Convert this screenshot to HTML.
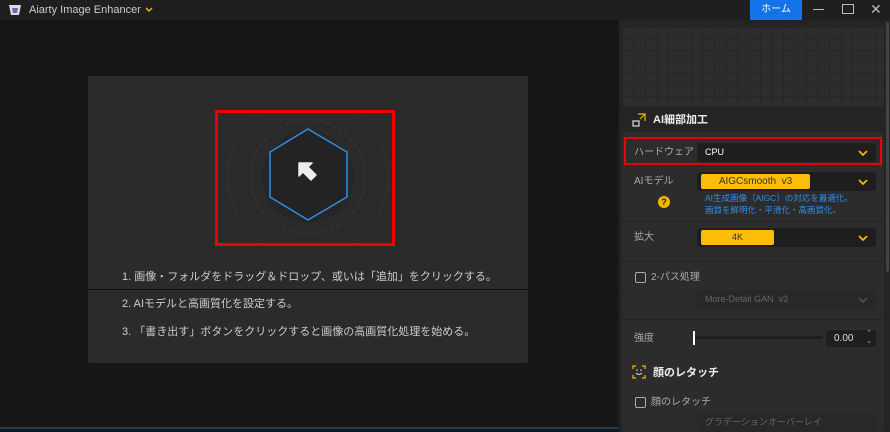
<!DOCTYPE html>
<html><head><meta charset="utf-8"><style>
*{margin:0;padding:0;box-sizing:border-box}
body{width:890px;height:432px;overflow:hidden;background:#161616;font-family:"Liberation Sans","Noto Sans CJK JP",sans-serif;position:relative;color:#ddd}
.abs{position:absolute}
.title{left:0;top:0;width:890px;height:20px;background:#1f1f1f}
.sel{background:#1e1e1e;border-radius:3px;height:19px}
.chev{position:absolute;right:8px;top:5px}
.lbl{font-size:10px;color:#aaa;line-height:12px}
</style></head><body>
<div class="abs title"></div>
<svg class="abs" style="left:8px;top:3px" width="14" height="14" viewBox="0 0 14 14"><path d="M1 2h12l-2 10H3z" fill="#ddd"/><path d="M4 5h6l-1 5H5z" fill="#7a5fb8"/></svg>
<div class="abs" style="left:29px;top:4px;font-size:11px;color:#ccc;line-height:13px">Aiarty Image Enhancer</div>
<svg class="abs" style="left:145px;top:7px" width="8" height="6"><path d="M1 1l3 3 3-3" stroke="#f2b800" stroke-width="1.5" fill="none"/></svg>
<div class="abs" style="left:750px;top:0;width:52px;height:20px;background:#1473e6;color:#fff;font-size:10px;text-align:center;line-height:19px">ホーム</div>
<div class="abs" style="left:813px;top:9px;width:11px;height:1px;background:#bbb"></div>
<div class="abs" style="left:842px;top:4px;width:12px;height:10px;border:1.5px solid #bbb"></div>
<div class="abs" style="left:870px;top:1px;color:#bbb;font-size:14px">✕</div>

<div class="abs" style="left:88px;top:76px;width:440px;height:287px;background:#2b2b2b;border-radius:2px"></div>
<div class="abs" style="left:0;top:289px;width:618px;height:1px;background:#111"></div>
<div class="abs" style="left:0;top:427px;width:618px;height:2px;background:#1c3d5c"></div>
<svg class="abs" style="left:215px;top:110px" width="180" height="136" viewBox="0 0 180 136">
<circle cx="93" cy="67" r="80" fill="none" stroke="#333" stroke-width="1"/>
<circle cx="93" cy="67" r="57" fill="none" stroke="#3a3a3a" stroke-dasharray="4 3"/>
<circle cx="93" cy="67" r="46" fill="#262626"/>
<polygon points="93,19 132,42 132,87 93,110 55,87 55,42" fill="#232323" stroke="#2f8ee8" stroke-width="1.5"/>
<path d="M84 53h13l-4 4 8 8-5 5-8-8-4 4z" fill="#eee" stroke="#eee" stroke-width="1.5" stroke-linejoin="round"/>
<rect x="1.5" y="1.5" width="177" height="133" fill="none" stroke="#e00" stroke-width="3"/>
</svg>
<div class="abs" style="left:122px;top:270px;font-size:11px;color:#ccc;line-height:14px">1. 画像・フォルダをドラッグ＆ドロップ、或いは「追加」をクリックする。</div>
<div class="abs" style="left:122px;top:297px;font-size:11px;color:#ccc;line-height:14px">2. AIモデルと高画質化を設定する。</div>
<div class="abs" style="left:122px;top:325px;font-size:11px;color:#ccc;line-height:14px">3. 「書き出す」ボタンをクリックすると画像の高画質化処理を始める。</div>

<div class="abs" style="left:618px;top:20px;width:272px;height:412px;background:#242424;border-left:1px solid #1a1a1a"></div>
<div class="abs" style="left:622px;top:27px;width:262px;height:80px;border-radius:4px;background-color:#2d2d2d;background-image:linear-gradient(#262626 1px,transparent 1px),linear-gradient(90deg,#262626 1px,transparent 1px);background-size:11.5px 11.5px"></div>
<svg class="abs" style="left:632px;top:113px" width="14" height="14"><rect x="1" y="8" width="6" height="5" fill="none" stroke="#ddd" stroke-width="1.2"/><path d="M6 1h7v7M13 1L8 6" stroke="#f2b800" stroke-width="1.2" fill="none"/></svg>
<div class="abs" style="left:653px;top:114px;font-size:11px;font-weight:bold;color:#eee;line-height:13px">AI細部加工</div>
<div class="abs" style="left:622px;top:132px;width:262px;height:273px;background:#2c2c2c;border-radius:4px"></div>
<div class="abs" style="left:624px;top:137px;width:258px;height:28px;border:2.5px solid #e00"></div>
<div class="abs lbl" style="left:634px;top:147px">ハードウェア</div>
<div class="abs sel" style="left:697px;top:143px;width:179px"><span style="position:absolute;left:8px;top:4px;font-size:9px;color:#fff;line-height:11px">CPU</span><svg class="chev" width="10" height="10"><path d="M1 3l4 4 4-4" stroke="#f2b800" stroke-width="1.8" fill="none"/></svg></div>
<div class="abs lbl" style="left:634px;top:176px">AIモデル</div>
<div class="abs sel" style="left:697px;top:172px;width:179px"><div style="position:absolute;left:4px;top:2px;width:109px;height:15px;background:#fbbd08;border-radius:2px;color:#333;font-size:10px;text-align:center;line-height:15px">AIGCsmooth&nbsp; v3</div><svg class="chev" width="10" height="10"><path d="M1 3l4 4 4-4" stroke="#f2b800" stroke-width="1.8" fill="none"/></svg></div>
<div class="abs" style="left:658px;top:196px;width:12px;height:12px;border-radius:50%;background:#f2b800;color:#222;font-size:9px;font-weight:bold;text-align:center;line-height:12px">?</div>
<div class="abs" style="left:705px;top:192px;font-size:8.5px;color:#2f8ee8;line-height:12px">AI生成画像（AIGC）の対応を最適化。<br>画質を鮮明化・平滑化・高画質化。</div>
<div class="abs" style="left:622px;top:221px;width:262px;height:1px;background:#242424"></div>
<div class="abs lbl" style="left:634px;top:232px">拡大</div>
<div class="abs sel" style="left:697px;top:228px;width:179px"><div style="position:absolute;left:4px;top:2px;width:73px;height:15px;background:#fbbd08;border-radius:2px;color:#333;font-size:9px;text-align:center;line-height:15px">4K</div><svg class="chev" width="10" height="10"><path d="M1 3l4 4 4-4" stroke="#f2b800" stroke-width="1.8" fill="none"/></svg></div>
<div class="abs" style="left:622px;top:261px;width:262px;height:1px;background:#242424"></div>
<div class="abs" style="left:635px;top:272px;width:11px;height:11px;border:1px solid #aaa;border-radius:2px"></div>
<div class="abs lbl" style="left:651px;top:272px">2-パス処理</div>
<div class="abs sel" style="left:697px;top:290px;width:179px;background:#282828"><span style="position:absolute;left:8px;top:4px;font-size:9px;color:#666;line-height:11px">More-Detail GAN&nbsp; v3</span><svg class="chev" width="10" height="10"><path d="M1 3l4 4 4-4" stroke="#555" stroke-width="1.5" fill="none"/></svg></div>
<div class="abs" style="left:622px;top:319px;width:262px;height:1px;background:#242424"></div>
<div class="abs lbl" style="left:634px;top:333px">強度</div>
<div class="abs" style="left:693px;top:336px;width:130px;height:3px;background:#1e1e1e;border-radius:2px"></div>
<div class="abs" style="left:693px;top:331px;width:2px;height:14px;background:#fff"></div>
<div class="abs sel" style="left:826px;top:330px;width:50px;height:17px"><span style="position:absolute;left:8px;top:3px;font-size:10px;color:#ddd;line-height:12px">0.00</span><span style="position:absolute;right:4px;top:0;font-size:7px;color:#aaa;line-height:8px">⌃<br>⌄</span></div>
<svg class="abs" style="left:632px;top:365px" width="14" height="14"><path d="M1 4V1h3M10 1h3v3M13 10v3h-3M4 13H1v-3" stroke="#f2b800" stroke-width="1.2" fill="none"/><path d="M4 8q3 3 6 0" stroke="#ddd" fill="none"/><circle cx="5" cy="5" r=".8" fill="#ddd"/><circle cx="9" cy="5" r=".8" fill="#ddd"/></svg>
<div class="abs" style="left:653px;top:367px;font-size:11px;font-weight:bold;color:#eee;line-height:13px">顔のレタッチ</div>
<div class="abs" style="left:622px;top:386px;width:262px;height:46px;background:#2c2c2c;border-radius:4px"></div>
<div class="abs" style="left:635px;top:397px;width:11px;height:11px;border:1px solid #aaa;border-radius:2px"></div>
<div class="abs lbl" style="left:651px;top:397px">顔のレタッチ</div>
<div class="abs sel" style="left:697px;top:413px;width:179px;background:#282828"><span style="position:absolute;left:8px;top:4px;font-size:9px;color:#666;line-height:11px">グラデーションオーバーレイ</span></div>
<div class="abs" style="left:886px;top:22px;width:3px;height:250px;background:#444;border-radius:2px"></div>
</body></html>
